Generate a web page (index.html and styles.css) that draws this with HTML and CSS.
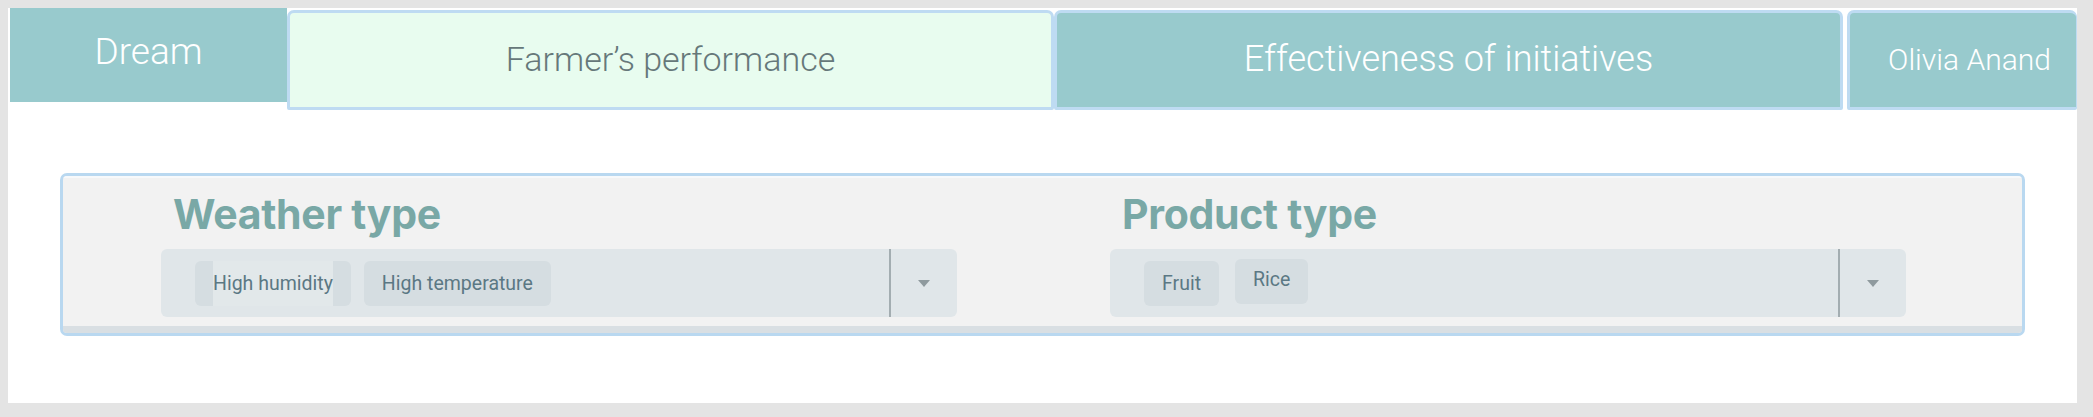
FILE: index.html
```html
<!DOCTYPE html>
<html lang="en">
<head>
<meta charset="utf-8">
<title>Dream</title>
<link rel="stylesheet" href="styles.css">
</head>
<body>
<div class="page">
  <nav class="tabs">
    <div class="tab brand">Dream</div>
    <div class="tab boxed active">Farmer’s performance</div>
    <div class="tab boxed wide">Effectiveness of initiatives</div>
    <div class="tab boxed user">Olivia Anand</div>
  </nav>
  <section class="filters">
    <div class="filter-body">
      <div class="filter">
        <h2 class="filter-title">Weather type</h2>
        <div class="select">
          <div class="values">
            <span class="chip chip-split"><span class="chip-text">High humidity</span></span>
            <span class="chip">High temperature</span>
          </div>
          <div class="divider"></div>
          <div class="indicator">
            <svg width="12" height="7" viewBox="0 0 12 7"><path d="M0 0H12L6 7Z" fill="#8f9a9e"/></svg>
          </div>
        </div>
      </div>
      <div class="filter">
        <h2 class="filter-title">Product type</h2>
        <div class="select">
          <div class="values values-wide">
            <span class="chip">Fruit</span>
            <span class="chip chip-up">Rice</span>
          </div>
          <div class="divider"></div>
          <div class="indicator">
            <svg width="12" height="7" viewBox="0 0 12 7"><path d="M0 0H12L6 7Z" fill="#8f9a9e"/></svg>
          </div>
        </div>
      </div>
    </div>
    <div class="filter-foot"></div>
  </section>
</div>
</body>
</html>
```

FILE: styles.css
```css
html, body {
  margin: 0;
  padding: 0;
}
body {
  background: #e4e4e4;
  padding: 8px;
}
.page {
  width: 2069px;
  height: 395px;
  background: #ffffff;
  box-sizing: border-box;
}
.tabs {
  display: flex;
  align-items: flex-start;
  padding-left: 2px;
}
.tab {
  display: flex;
  align-items: center;
  justify-content: center;
  box-sizing: border-box;
  background: #98cacd;
  color: #ffffff;
  font-family: Roboto, "Liberation Sans", sans-serif;
  font-size: 34px;
  font-weight: 300;
  white-space: nowrap;
  overflow: hidden;
}
.brand {
  width: 277px;
  height: 94px;
  font-size: 37px;
  padding-bottom: 8px;
}
.boxed {
  margin-top: 2px;
  height: 100px;
  border: 3px solid #bedbf2;
  border-radius: 7px 7px 2px 2px;
  padding-bottom: 2px;
}
.active {
  width: 767px;
  background: #e8fcef;
  color: #66787a;
}
.wide {
  width: 789px;
  font-size: 36px;
}
.user {
  margin-left: 4px;
  flex: 1;
  font-size: 30px;
  padding-left: 13px;
  border-right-width: 1px;
}
.filters {
  margin: 63px 0 0 52px;
  width: 1965px;
  box-sizing: border-box;
  border: 3px solid #b9d8f0;
  border-radius: 7px;
  background: #f2f2f2;
  overflow: hidden;
}
.filter-body {
  display: grid;
  grid-template-columns: 796px 796px;
  column-gap: 153px;
  padding: 12px 0 9px 98px;
  border-top: 2px solid #f7f9fb;
}
.filter-title {
  margin: 0 0 11px 12px;
  font-family: Inter, "Liberation Sans", sans-serif;
  font-weight: 700;
  font-size: 41px;
  line-height: 48px;
  color: #79a8a6;
  letter-spacing: -0.3px;
}
.select {
  display: flex;
  align-items: stretch;
  height: 68px;
  border-radius: 6px;
  background: #e0e6e9;
}
.values {
  flex: 1;
  display: flex;
  align-items: center;
  gap: 13px;
  padding-left: 34px;
}
.values-wide {
  gap: 16px;
}
.chip {
  display: flex;
  align-items: center;
  height: 45px;
  box-sizing: border-box;
  padding: 0 18px;
  border-radius: 6px;
  background: #d5dde1;
  color: #5b7884;
  font-family: Roboto, "Liberation Sans", sans-serif;
  font-size: 19.5px;
  font-weight: 400;
}
.chip-split {
  padding: 0;
  border-left: 18px solid #d5dde1;
  border-right: 18px solid #d5dde1;
  background: #e2e8ea;
}
.chip-split .chip-text {
  display: flex;
  align-items: center;
  height: 100%;
}
.chip-up {
  margin-top: -4px;
  padding-bottom: 3px;
}
.divider {
  width: 2px;
  background: #a3adb1;
}
.indicator {
  width: 66px;
  display: flex;
  align-items: center;
  justify-content: center;
}
.filter-foot {
  height: 7px;
  background: #d9dfe3;
}
```
